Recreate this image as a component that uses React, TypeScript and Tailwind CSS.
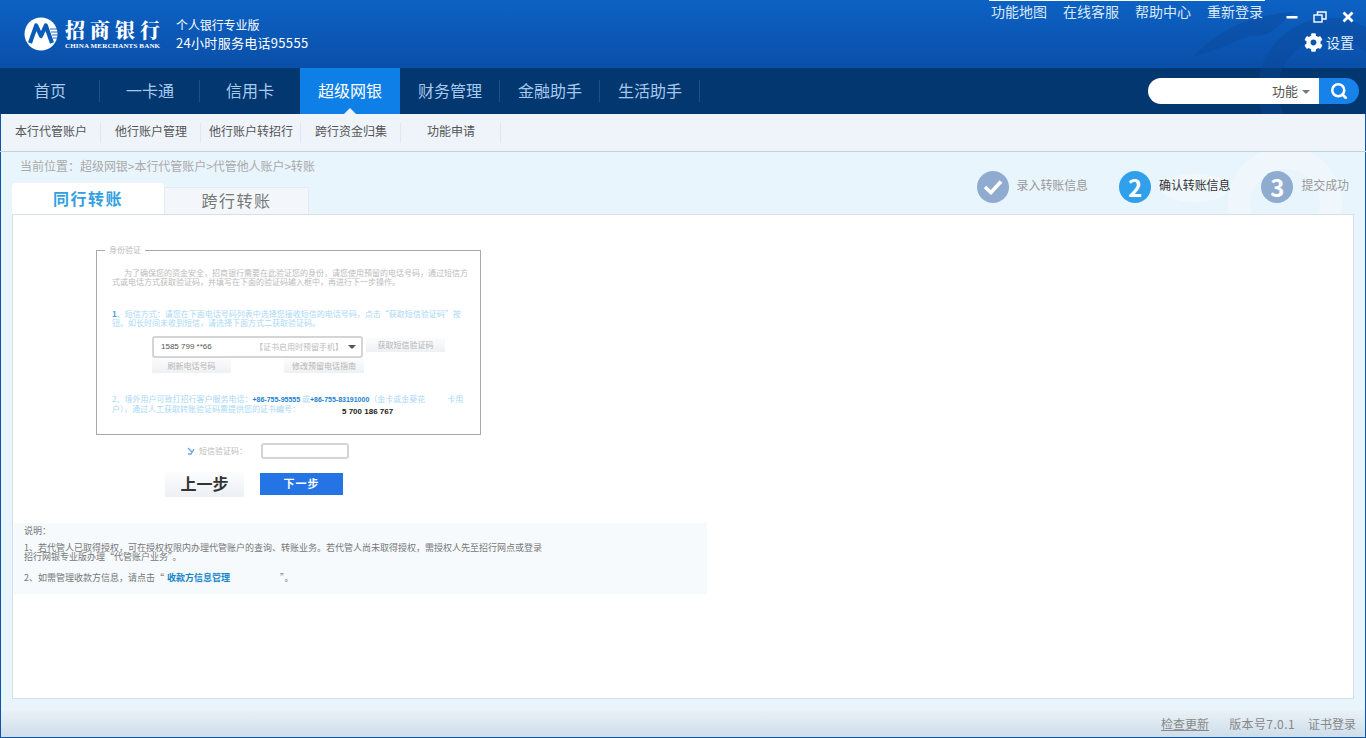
import { FaCog } from "react-icons/fa";
import { Search } from "lucide-react";

const navItems = ["首页", "一卡通", "信用卡", "超级网银", "财务管理", "金融助手", "生活助手"];
const subItems = ["本行代管账户", "他行账户管理", "他行账户转招行", "跨行资金归集", "功能申请"];
const topLinks = ["功能地图", "在线客服", "帮助中心", "重新登录"];

function Logo() {
  return (
    <svg width="34" height="34" viewBox="0 0 34 34" className="shrink-0">
      <circle cx="17" cy="17" r="16.5" fill="#fff" />
      <path d="M6 26 L12.2 8.5 L17 19 L21.8 8.5 L28 26" fill="none" stroke="#0b5cb9" strokeWidth="4.2" strokeLinejoin="round" />
      <path d="M26 12H34M27 15H34M28 18H34M29 21H34" stroke="#0b5cb9" strokeWidth="0.9" />
    </svg>
  );
}

function Swirl({ color }: { color: string }) {
  return (
    <svg width="200" height="114" viewBox="0 0 200 114" fill="none">
      <circle cx="164" cy="90" r="62" stroke={color} strokeWidth="20" />
      <path d="M28 56 C50 32 85 14 128 12 L112 26 C104 36 92 36 84 36 C66 42 48 52 28 56 Z" fill={color} />
    </svg>
  );
}

function Step({ mark, label, active }: { mark: React.ReactNode; label: string; active?: boolean }) {
  return (
    <div className="flex items-center gap-[8px]">
      <div
        className={`flex h-[32px] w-[32px] items-center justify-center rounded-full text-[24px] font-bold text-white ${
          active ? "bg-[#30a0ec]" : "bg-[#90abd0]"
        }`}
      >
        {mark}
      </div>
      <span className={`mb-[5px] text-[12px] tracking-[-0.1px] ${active ? "text-[#333]" : "text-[#999]"}`}>{label}</span>
    </div>
  );
}

function GhostButton({ label, className }: { label: string; className: string }) {
  return (
    <div className={`flex items-center justify-center bg-gradient-to-b from-[#fbfcfd] to-[#eef1f4] text-[8px] text-[#b5b5b5] ${className}`}>
      {label}
    </div>
  );
}

export default function App() {
  return (
    <div
      className="flex h-[738px] w-[1366px] flex-col overflow-hidden bg-[#e9f5fd]"
      style={{ fontFamily: '"Noto Sans CJK SC", "Noto Sans", sans-serif' }}
    >
      {/* title bar */}
      <header className="relative flex h-[68px] shrink-0 items-start overflow-hidden bg-gradient-to-b from-[#0c62c4] to-[#0a4fa9] pl-[24px]">
        <div className="pointer-events-none absolute right-0 top-0 opacity-40">
          <Swirl color="#0b4796" />
        </div>
        <div className="absolute left-[989px] top-0 h-px w-[276px] bg-white" />
        <div className="mt-[17px] flex items-start">
          <Logo />
          <div className="ml-[7px] mt-[2px] flex w-[100px] flex-col text-white">
            <span className="whitespace-nowrap text-[20px] font-black leading-[22px] tracking-[5px]" style={{ fontFamily: '"Noto Serif CJK SC", "Noto Sans CJK SC", serif' }}>
              招商银行
            </span>
            <span className="mt-px whitespace-nowrap text-[7px] font-bold leading-[8px] tracking-[0.15px]" style={{ fontFamily: '"Liberation Serif", serif' }}>
              CHINA MERCHANTS BANK
            </span>
          </div>
          <div className="-mt-px ml-[11px] flex flex-col text-white">
            <span className="whitespace-nowrap text-[12px] leading-[18px] tracking-[-0.1px]">个人银行专业版</span>
            <span className="whitespace-nowrap text-[13px] leading-[18px] tracking-[0.3px]">24小时服务电话95555</span>
          </div>
        </div>
        <div className="relative ml-auto flex h-full flex-col items-end pr-[12px]">
          <div className="flex items-start">
            <div className="mr-[23px] mt-[2px] flex gap-[16px] text-[14px] leading-[18px] text-[#dbe9f8]">
              {topLinks.map((l) => (
                <span key={l} className="whitespace-nowrap">{l}</span>
              ))}
            </div>
            <div className="mt-[11px] flex items-center gap-[15px]">
              <svg width="12" height="12" viewBox="0 0 12 12"><rect x="0.5" y="5" width="11" height="2.5" fill="#fff" /></svg>
              <svg width="14" height="12" viewBox="0 0 14 12" fill="none" stroke="#fff" strokeWidth="1.4">
                <rect x="1" y="4" width="8" height="7" />
                <path d="M4.5 4V1H13V8H9" />
              </svg>
              <svg width="12" height="12" viewBox="0 0 12 12" stroke="#fff" strokeWidth="2.8"><path d="M1.5 1.5L10.5 10.5M10.5 1.5L1.5 10.5" /></svg>
            </div>
          </div>
          <div className="mt-[9px] flex items-center gap-[3px] text-[14px] leading-[20px] text-[#e4effa]">
            <FaCog className="text-[19px] text-white" />
            <span>设置</span>
          </div>
        </div>
      </header>

      {/* main nav */}
      <nav className="relative flex h-[46px] shrink-0 items-center overflow-hidden bg-[#03376f] pr-[7px]">
        <div className="pointer-events-none absolute right-0 -top-[68px] opacity-40">
          <Swirl color="#0b4796" />
        </div>
        {navItems.map((item, i) => (
          <div
            key={item}
            className={`relative flex h-full w-[100px] items-center justify-center pb-[2px] text-[16px] ${
              i === 3 ? "bg-[#0f7fe8] text-white" : "text-[#a7c9ee]"
            }`}
          >
            {item}
            {i !== 2 && i !== 3 && (
              <span className="absolute right-0 top-[12px] h-[22px] w-px bg-[#1c5088]" />
            )}
            {i === 3 && (
              <span className="absolute bottom-0 left-[44px] h-0 w-0 border-x-[6px] border-b-[6px] border-x-transparent border-b-[#eef4fa]" />
            )}
          </div>
        ))}
        <div className="relative ml-auto flex h-[26px] w-[211px] overflow-hidden rounded-full">
          <div className="flex flex-1 items-center justify-end gap-[4px] bg-white pr-[9px] text-[13px] text-[#555]">
            <span>功能</span>
            <span className="mt-[2px] h-0 w-0 border-x-[4px] border-t-[4px] border-x-transparent border-t-[#777]" />
          </div>
          <div className="flex w-[40px] items-center justify-center bg-[#1782ea]">
            <Search size={18} strokeWidth={3.4} color="#fff" />
          </div>
        </div>
      </nav>

      {/* sub nav */}
      <div className="flex h-[38px] shrink-0 items-center border-b border-[#c3d1de] bg-[#eef4fa] pl-px shadow-[inset_1px_0_0_#0b55ad,inset_-1px_0_0_#0b55ad]">
        {subItems.map((item) => (
          <div key={item} className="relative flex h-full w-[100px] items-center justify-center whitespace-nowrap pb-[3px] text-[12px] text-[#555]">
            {item}
            <span className="absolute right-0 top-[9px] h-[20px] w-px bg-[#dfe7ef]" />
          </div>
        ))}
      </div>

      {/* content */}
      <main className="relative flex min-h-0 flex-1 flex-col px-[12px] shadow-[inset_1px_0_0_#0b55ad,inset_-1px_0_0_#0b55ad]">
        <svg className="pointer-events-none absolute right-[1px] top-0 opacity-70" width="220" height="62" viewBox="0 0 220 62" fill="none">
          <ellipse cx="50" cy="36" rx="34" ry="14" fill="#f4fafe" />
          <circle cx="140" cy="52" r="46" stroke="#f2f9fe" strokeWidth="22" />
        </svg>
        <div className="relative flex h-[62px] shrink-0 items-end">
          <div className="absolute left-[8px] top-[5px] flex text-[12px] leading-[18px] text-[#aaa]">
            <span>当前位置：</span>
            <span className="tracking-[-0.05px]">超级网银&gt;本行代管账户&gt;代管他人账户&gt;转账</span>
          </div>
          <div className="flex h-[31px] w-[152px] items-center justify-center rounded-t-sm bg-white pb-[1px] text-[16px] font-bold tracking-[1.5px] text-[#33a0e0]">
            同行转账
          </div>
          <div className="flex h-[27px] w-[145px] items-center justify-center border border-b-0 border-[#e4ebf2] bg-[#f3f7fb] pb-[2px] text-[16px] tracking-[1.5px] text-[#777]">
            跨行转账
          </div>
          <div className="absolute right-[5px] top-[19px] flex gap-[31px]">
            <Step
              label="录入转账信息"
              mark={
                <svg width="20" height="16" viewBox="0 0 20 16" fill="none" stroke="#fff" strokeWidth="3.6"><path d="M2 8l6 5.5L18 2.5" /></svg>
              }
            />
            <Step label="确认转账信息" mark="2" active />
            <Step label="提交成功" mark="3" />
          </div>
        </div>

        <section className="relative mb-[11px] flex-1 border border-[#d5e0e8] bg-white pt-[35px]">
          <div className="relative ml-[83px] h-[185px] w-[385px] border border-[#a8a8a8] px-[15px] pt-[17px]">
            <span className="absolute -top-[6px] left-[8px] bg-white px-[4px] text-[8px] leading-[10px] text-[#bbb]">身份验证</span>
            <p className="w-[356px] text-[8px] leading-[9px] text-[#bbb]">
              <span className="ml-[12px]" />为了确保您的资金安全，招商银行需要在此验证您的身份，请您使用预留的电话号码，通过短信方式或电话方式获取验证码，并填写在下面的验证码输入框中，再进行下一步操作。
            </p>
            <p className="mt-[23px] w-[352px] text-[8px] leading-[9px] text-[#a9d8f5]">
              <span className="font-bold text-[#3b9fe0]">1</span>、短信方式：请您在下面电话号码列表中选择您接收短信的电话号码，点击“获取短信验证码”按钮。如长时间未收到短信，请选择下面方式二获取验证码。
            </p>
            <div className="mt-[9px] flex items-start pl-[40px]">
              <div className="flex h-[22px] w-[211px] items-center justify-between rounded-[3px] border-2 border-[#d5d5d5] pl-[7px] pr-[5px] text-[8px] text-[#555]">
                <span style={{ fontFamily: '"Liberation Sans", sans-serif' }}>1585 799 **66</span>
                <span className="flex items-center gap-[5px]">
                  <span className="text-[#bbb]">【证书启用时预留手机】</span>
                  <span className="h-0 w-0 border-x-[4px] border-t-[4px] border-x-transparent border-t-[#555]" />
                </span>
              </div>
              <GhostButton label="获取短信验证码" className="ml-[3px] mt-[2px] h-[14px] w-[79px]" />
            </div>
            <div className="flex pl-[40px]">
              <GhostButton label="刷新电话号码" className="h-[15px] w-[79px]" />
              <GhostButton label="修改预留电话指南" className="ml-[53px] h-[15px] w-[80px]" />
            </div>
            <p className="mt-[21px] w-[356px] text-[8px] leading-[9px] text-[#a9d8f5]">
              2、境外用户可致打招行客户服务电话：<span className="text-[7px] font-bold text-[#1b7fd0]" style={{ fontFamily: '"Liberation Sans", sans-serif' }}>+86-755-95555</span> 或<span className="text-[7px] font-bold text-[#1b7fd0]" style={{ fontFamily: '"Liberation Sans", sans-serif' }}>+86-755-83191000</span>（金卡或金葵花<span className="ml-[22px]">卡用户）</span>，通过人工获取转账验证码需提供您的证书编号：
              <span className="ml-[42px] inline-block translate-y-[2px] font-bold text-[#222]" style={{ fontFamily: '"Liberation Sans", sans-serif' }}>5 700 186 767</span>
            </p>
          </div>

          <div className="ml-[174px] mt-[8px] flex items-center">
            <svg width="8" height="8" viewBox="0 0 8 8" stroke="#6fa5dc" strokeWidth="1.4" fill="none"><path d="M1 1l4 4M7 2L4 7H1" /></svg>
            <span className="ml-[4px] text-[8px] text-[#bbb]">短信验证码：</span>
            <div className="ml-[14px] h-[16px] w-[88px] rounded-[3px] border-2 border-[#d5d5d5]" />
          </div>

          <div className="ml-[152px] mt-[13px] flex items-start">
            <div className="flex h-[25px] w-[79px] items-center justify-center bg-gradient-to-b from-[#fdfdfe] to-[#eceff3] pb-[3px] text-[16px] font-bold text-[#333]">
              上一步
            </div>
            <div className="ml-[16px] mt-px flex h-[22px] w-[83px] items-center justify-center bg-[#2474e6] pb-[2px] text-[11px] font-bold tracking-[1px] text-white">
              下一步
            </div>
          </div>

          <div className="mt-[26px] h-[71px] w-[694px] bg-[#f6fafd] pl-[11px] pt-[3px] text-[9px] leading-[9px] text-[#777]">
            <p>说明：</p>
            <p className="mt-[8px]">1、若代管人已取得授权，可在授权权限内办理代管账户的查询、转账业务。若代管人尚未取得授权，需授权人先至招行网点或登录</p>
            <p>招行网银专业版办理“代管账户业务”。</p>
            <p className="mt-[12px]">
              2、如需管理收款方信息，请点击“
              <span className="ml-[3px] font-bold text-[#1385c8]">收款方信息管理</span>
              <span className="ml-[50px]">”。</span>
            </p>
          </div>
        </section>
      </main>

      {/* status bar */}
      <footer className="flex h-[28px] shrink-0 items-center justify-end gap-[20px] border-b border-[#0b55ad] bg-gradient-to-b from-[#e9f1f7] to-[#cfdeea] pr-[10px] text-[12px] text-[#888] shadow-[inset_1px_0_0_#0b55ad,inset_-1px_0_0_#0b55ad]">
        <span className="underline">检查更新</span>
        <span className="flex gap-[13px]">
          <span className="tracking-[0.4px]">版本号7.0.1</span>
          <span>证书登录</span>
        </span>
      </footer>
    </div>
  );
}
